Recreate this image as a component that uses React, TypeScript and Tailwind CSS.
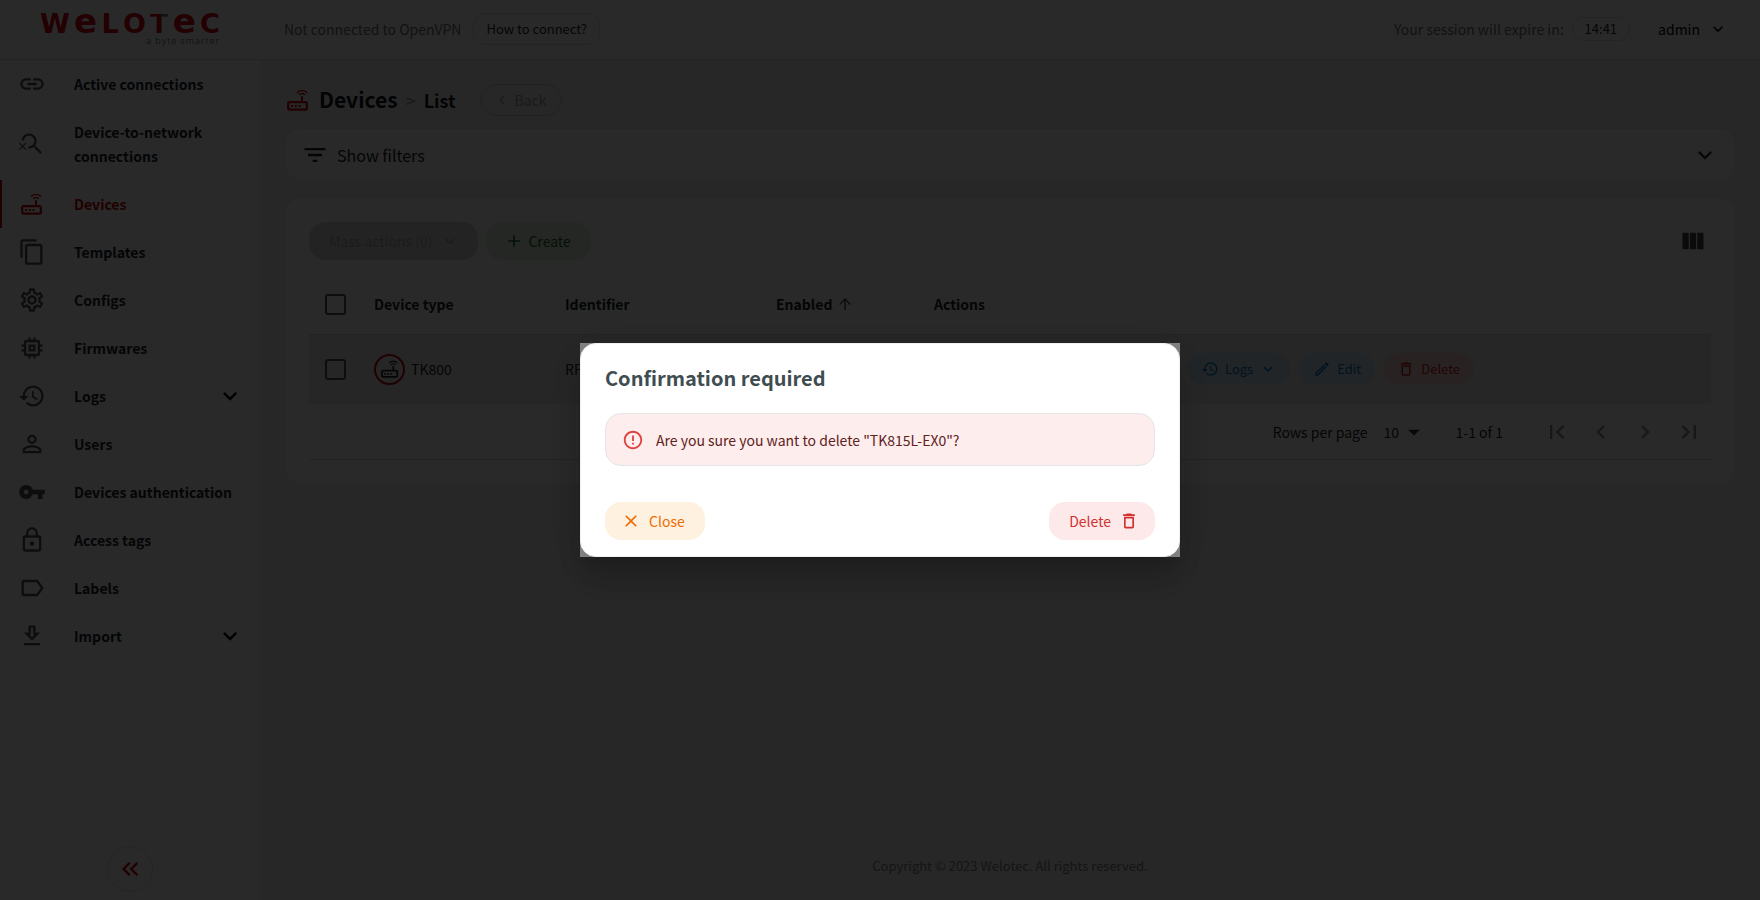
import type { ComponentType, ReactNode } from "react";
import {
  MdLink,
  MdSearchOff,
  MdContentCopy,
  MdOutlineSettings,
  MdHistory,
  MdPersonOutline,
  MdVpnKey,
  MdLockOutline,
  MdExpandMore,
  MdKeyboardDoubleArrowLeft,
  MdFilterList,
  MdViewColumn,
  MdChevronLeft,
  MdChevronRight,
  MdFirstPage,
  MdLastPage,
  MdArrowDropDown,
  MdArrowUpward,
  MdAdd,
  MdOutlineEdit,
  MdDeleteOutline,
  MdErrorOutline,
  MdClose,
} from "react-icons/md";

type IconProps = { className?: string };

function RouterIcon({ className }: IconProps) {
  return (
    <svg viewBox="0 0 22 22" fill="none" stroke="currentColor" className={className} aria-hidden="true">
      <rect x="1.2" y="13.1" width="18.6" height="7.6" rx="1.4" strokeWidth="2.2" />
      <path d="M4 16h2v2H4zM7.8 16h2v2h-2zM11.6 16h2v2h-2z" fill="currentColor" stroke="none" />
      <path d="M15 7.2v5.4" strokeWidth="2" />
      <path d="M10 3.8C12.6.5 17.4.5 20 3.8M12.1 5.9c1.6-1.8 4.2-1.8 5.8 0" strokeWidth="1.4" />
    </svg>
  );
}

function ChipIcon({ className }: IconProps) {
  return (
    <svg viewBox="0 0 24 24" fill="currentColor" className={className} aria-hidden="true">
      <path d="M15 9H9v6h6V9zm-2 4h-2v-2h2v2zm8-2V9h-2V7c0-1.1-.9-2-2-2h-2V3h-2v2h-2V3H9v2H7c-1.1 0-2 .9-2 2v2H3v2h2v2H3v2h2v2c0 1.1.9 2 2 2h2v2h2v-2h2v2h2v-2h2c1.1 0 2-.9 2-2v-2h2v-2h-2v-2h2zm-4 6H7V7h10v10z" />
    </svg>
  );
}

function LabelIcon({ className }: IconProps) {
  return (
    <svg viewBox="0 0 24 24" fill="currentColor" className={className} aria-hidden="true">
      <path d="M17.63 5.84C17.27 5.33 16.67 5 16 5L5 5.01C3.9 5.01 3 5.9 3 7v10c0 1.1.9 1.99 2 1.99L16 19c.67 0 1.27-.33 1.63-.84L22 12l-4.37-6.16zM16 17H5V7h11l3.55 5L16 17z" />
    </svg>
  );
}

function ImportIcon({ className }: IconProps) {
  return (
    <svg viewBox="0 0 24 24" fill="currentColor" className={className} aria-hidden="true">
      <path d="M19 9h-4V3H9v6H5l7 7 7-7zm-8 2V5h2v6h1.17L12 13.17 9.83 11H11zm-6 7h14v2H5z" />
    </svg>
  );
}

type NavItem = {
  label: string;
  icon: ComponentType<IconProps>;
  active?: boolean;
  expandable?: boolean;
};

const navItems: NavItem[] = [
  { label: "Active connections", icon: MdLink },
  { label: "Device-to-network connections", icon: MdSearchOff },
  { label: "Devices", icon: RouterIcon, active: true },
  { label: "Templates", icon: MdContentCopy },
  { label: "Configs", icon: MdOutlineSettings },
  { label: "Firmwares", icon: ChipIcon },
  { label: "Logs", icon: MdHistory, expandable: true },
  { label: "Users", icon: MdPersonOutline },
  { label: "Devices authentication", icon: MdVpnKey },
  { label: "Access tags", icon: MdLockOutline },
  { label: "Labels", icon: LabelIcon },
  { label: "Import", icon: ImportIcon, expandable: true },
];

function Logo() {
  return (
    <a href="#" aria-label="Welotec, a byte smarter" className="flex w-[180px] flex-col items-end gap-1">
      <span className="flex h-5 w-full items-baseline justify-between font-['DejaVu_Sans'] text-[27px] leading-5 font-bold text-[#d8000c]">
        <span>W</span>
        <span className="text-[34px] leading-5">e</span>
        <span>L</span>
        <span>O</span>
        <span className="bg-linear-to-r from-[#d8000c] from-60% to-[#777777] to-60% bg-clip-text text-transparent">T</span>
        <span className="text-[34px] leading-5">e</span>
        <span>C</span>
      </span>
      <span className="font-['Open_Sans'] text-[9px] leading-3 tracking-widest text-[#777777]">a byte smarter</span>
    </a>
  );
}

function Header() {
  return (
    <header className="flex h-[60px] items-center border-b border-[#dfe1e2] bg-white pb-0.5">
      <div className="w-[284px] shrink-0 pl-10">
        <Logo />
      </div>
      <p className="text-sm text-[#707070]">Not connected to OpenVPN</p>
      <button type="button" className="ml-3 h-8 rounded-xl border border-[#dcdcdc] px-3 text-[13px] text-[#222b2e]">
        How to connect?
      </button>
      <p className="ml-auto text-sm text-[#707070]">Your session will expire in:</p>
      <span className="ml-2 h-6 rounded-xl border border-[#dcdcdc] px-3 text-[13px] leading-[22px] text-[#222b2e]">14:41</span>
      <button type="button" className="mr-8 ml-7 flex items-center gap-2 text-sm text-black">
        admin
        <MdExpandMore className="size-5" />
      </button>
    </header>
  );
}

function Sidebar() {
  return (
    <aside className="flex w-[260px] shrink-0 flex-col bg-white pb-2">
      <nav>
        <ul>
          {navItems.map(({ label, icon: Icon, active, expandable }) => (
            <li key={label}>
              <a
                href="#"
                className={
                  active
                    ? "flex min-h-12 items-center border-l-2 border-[#c8000c] py-2.5 pr-4 pl-4 text-[#c8000c]"
                    : "flex min-h-12 items-center py-2.5 pr-4 pl-[18px] text-[#1c2427]"
                }
              >
                <span className={active ? "grid size-7 place-items-center" : "grid size-7 place-items-center text-[#555555]"}>
                  <Icon className={active ? "size-[22px]" : "size-7"} />
                </span>
                <span className={label.length > 24 ? "ml-7 flex-1 py-0.5 text-sm leading-6 font-bold" : "ml-7 flex-1 text-sm leading-6 font-bold"}>
                  {label}
                </span>
                {expandable && <MdExpandMore className="size-7 text-black" />}
              </a>
            </li>
          ))}
        </ul>
      </nav>
      <button
        type="button"
        aria-label="Collapse menu"
        className="mx-auto mt-auto grid size-[46px] place-items-center rounded-full border border-[#dcdcdc] text-[#c8000c]"
      >
        <MdKeyboardDoubleArrowLeft className="size-7" />
      </button>
    </aside>
  );
}

function PillButton({ className, children }: { className: string; children: ReactNode }) {
  return (
    <button type="button" className={`flex h-8 items-center gap-[6px] rounded-2xl px-[14px] text-[13px] ${className}`}>
      {children}
    </button>
  );
}

function Checkbox({ label }: { label: string }) {
  return (
    <input
      type="checkbox"
      aria-label={label}
      className="ml-4 block size-[21px] appearance-none rounded-[3px] border-2 border-[#555555]"
    />
  );
}

function DeviceTable() {
  return (
    <table className="mt-[19px] w-full table-fixed text-left text-sm text-[#1c2427]">
      <thead>
        <tr className="h-[55px] border-b border-[#d8dadb]">
          <th className="w-[49px] pb-1">
            <Checkbox label="Select all" />
          </th>
          <th className="w-[191px] px-4 pb-1 font-bold">Device type</th>
          <th className="w-[211px] px-4 pb-1 font-bold">Identifier</th>
          <th className="w-[158px] px-4 pb-1 font-bold">
            <span className="flex items-center gap-1">
              Enabled
              <MdArrowUpward className="size-[18px] text-[#555555]" />
            </span>
          </th>
          <th className="px-4 pb-1 font-bold">Actions</th>
        </tr>
      </thead>
      <tbody>
        <tr className="h-[70px] bg-[#ededed]">
          <td>
            <Checkbox label="Select TK800" />
          </td>
          <td className="px-4">
            <span className="flex items-center gap-[6px]">
              <span className="grid size-[31px] place-items-center rounded-full border-2 border-[#c8000c]">
                <RouterIcon className="size-[18px]" />
              </span>
              TK800
            </span>
          </td>
          <td className="px-4">RF</td>
          <td />
          <td className="pl-[269px]">
            <div className="flex gap-2">
              <PillButton className="bg-[#cfe6f2] text-[#0277bd]">
                <MdHistory className="size-[18px]" />
                Logs
                <MdExpandMore className="size-[18px]" />
              </PillButton>
              <PillButton className="bg-[#cfe6f2] text-[#0277bd]">
                <MdOutlineEdit className="size-[18px]" />
                Edit
              </PillButton>
              <PillButton className="bg-[#f6d2d2] text-[#c62828]">
                <MdDeleteOutline className="size-[18px]" />
                Delete
              </PillButton>
            </div>
          </td>
        </tr>
      </tbody>
    </table>
  );
}

function Pagination() {
  return (
    <div className="flex h-14 items-center justify-end border-b border-[#d8dadb] pr-2 text-sm text-[#1c2427]">
      <label htmlFor="rows-per-page">Rows per page</label>
      <span className="relative ml-4 flex items-center">
        <select id="rows-per-page" defaultValue="10" className="w-9 appearance-none bg-transparent">
          <option>10</option>
        </select>
        <MdArrowDropDown className="pointer-events-none absolute -right-2 size-7 text-[#333333]" />
      </span>
      <span className="ml-9">1-1 of 1</span>
      <div className="ml-10 flex gap-4 text-[#909090]">
        <button type="button" disabled aria-label="First page">
          <MdFirstPage className="size-7" />
        </button>
        <button type="button" disabled aria-label="Previous page">
          <MdChevronLeft className="size-7" />
        </button>
        <button type="button" disabled aria-label="Next page">
          <MdChevronRight className="size-7" />
        </button>
        <button type="button" disabled aria-label="Last page">
          <MdLastPage className="size-7" />
        </button>
      </div>
    </div>
  );
}

function Content() {
  return (
    <main className="flex min-w-0 flex-1 flex-col bg-[#f1f1f2] px-6 pt-6">
      <div className="flex h-8 items-center text-[#111719]">
        <RouterIcon className="ml-[3px] size-[22px] text-[#c8000c]" />
        <h1 className="ml-[10px] text-[21px] font-bold">Devices</h1>
        <span className="mx-2 text-lg text-[#999999]">&gt;</span>
        <h2 className="text-lg font-bold">List</h2>
        <button
          type="button"
          className="ml-6 flex h-8 items-center gap-1 rounded-2xl border border-[#cfcfcf] pr-[14px] pl-3 text-sm text-[#a0a0a0]"
        >
          <MdChevronLeft className="size-[18px]" />
          Back
        </button>
      </div>

      <button
        type="button"
        className="mt-3 flex h-[53px] items-center rounded-2xl border border-[#e9e9ea] bg-white px-4 text-base text-[#1c2427]"
      >
        <MdFilterList className="size-7 text-[#222222]" />
        <span className="ml-2">Show filters</span>
        <MdExpandMore className="ml-auto size-7 text-[#333333]" />
      </button>

      <section className="mt-4 rounded-2xl border border-[#e9e9ea] bg-white p-6">
        <div className="flex items-center gap-2">
          <button
            type="button"
            disabled
            className="flex h-[38px] items-center rounded-2xl bg-[#d9d9d9] pr-[18px] pl-5 text-sm text-[#aaaaaa]"
          >
            Mass actions (0)
            <MdExpandMore className="ml-2 size-5" />
          </button>
          <button type="button" className="flex h-[38px] items-center rounded-2xl bg-[#e4eee4] pr-5 pl-[18px] text-sm text-[#1b6e20]">
            <MdAdd className="mr-1 size-5" />
            Create
          </button>
          <button type="button" aria-label="Columns" className="mr-1 ml-auto text-[#444444]">
            <MdViewColumn className="size-7" />
          </button>
        </div>
        <DeviceTable />
        <Pagination />
      </section>

      <footer className="mt-auto pb-6 text-center text-[13px] leading-5 text-[#808080]">
        Copyright © 2023 Welotec. All rights reserved.
      </footer>
    </main>
  );
}

function ConfirmDialog() {
  return (
    <div className="fixed inset-0 grid place-items-center bg-black/84">
      <div className="bg-[#808080] shadow-[0_11px_15px_-7px_rgba(0,0,0,0.2),0_24px_38px_3px_rgba(0,0,0,0.14),0_9px_46px_8px_rgba(0,0,0,0.12)]">
        <div
          role="dialog"
          aria-modal="true"
          aria-labelledby="confirm-title"
          className="w-[600px] rounded-2xl border border-[#f0f0f0] bg-white px-6 pt-5 pb-4"
        >
          <h2 id="confirm-title" className="text-xl leading-7 font-bold text-[#3f4d51]">
            Confirmation required
          </h2>
          <div className="mt-[21px] flex h-[53px] items-center rounded-2xl border border-[#e5e5e5] bg-[#fdeded] pl-4 text-sm text-[#5f2120]">
            <MdErrorOutline className="size-[22px] text-[#dd4343]" />
            <span className="ml-3">Are you sure you want to delete "TK815L-EX0"?</span>
          </div>
          <div className="mt-9 flex justify-between">
            <button type="button" className="flex h-[38px] items-center rounded-2xl bg-[#fff1e0] pr-5 pl-4 text-sm text-[#ef6c00]">
              <MdClose className="mr-2 size-5" />
              Close
            </button>
            <button type="button" className="flex h-[38px] items-center rounded-2xl bg-[#fde9ea] pr-4 pl-5 text-sm text-[#d32f2f]">
              Delete
              <MdDeleteOutline className="ml-2 size-5" />
            </button>
          </div>
        </div>
      </div>
    </div>
  );
}

export default function App() {
  return (
    <div className="flex min-h-screen flex-col font-['Noto_Sans_CJK_SC',sans-serif]">
      <Header />
      <div className="flex flex-1">
        <Sidebar />
        <Content />
      </div>
      <ConfirmDialog />
    </div>
  );
}
